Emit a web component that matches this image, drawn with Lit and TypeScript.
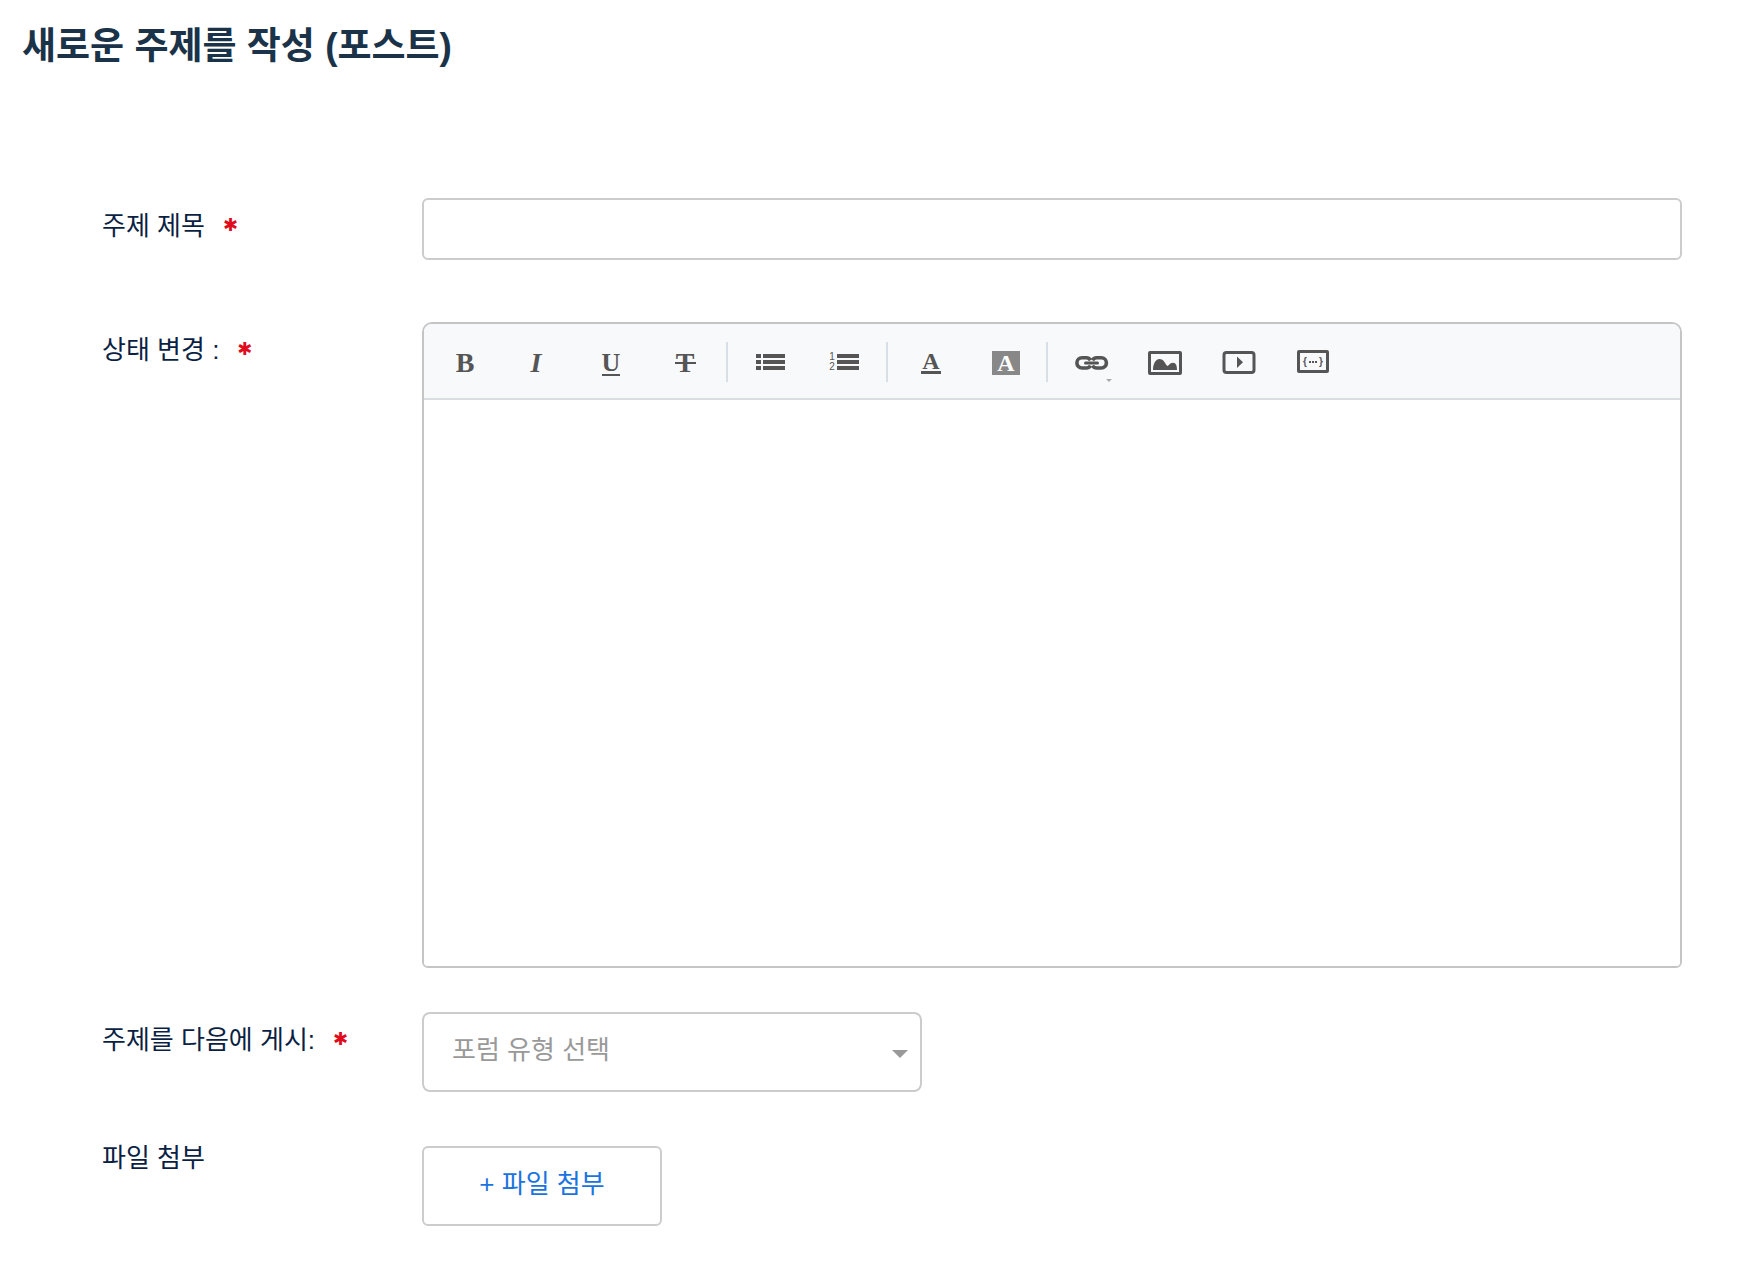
import { LitElement, html, css, svg, TemplateResult, SVGTemplateResult } from "lit";
import { customElement } from "lit/decorators.js";

interface Tool {
  label: string;
  art: SVGTemplateResult;
}

const toolGroups: Tool[][] = [
  [
    { label: "굵게", art: svg`<text class="serif large" x="39" y="48">B</text>` },
    { label: "기울임", art: svg`<text class="serif large italic" x="36" y="48">I</text>` },
    {
      label: "밑줄",
      art: svg`<text class="serif medium" x="37" y="47">U</text><rect x="28" y="50" width="18" height="2" />`,
    },
    {
      label: "취소선",
      art: svg`<text class="serif large" x="37" y="48">T</text><rect x="27" y="38" width="21" height="2" />`,
    },
  ],
  [
    {
      label: "글머리 기호 목록",
      art: svg`<path d="M22 30h5v4h-5zM29 30h22v4h-22zM22 36h5v4h-5zM29 36h22v4h-22zM22 42h5v4h-5zM29 42h22v4h-22z" />`,
    },
    {
      label: "번호 매기기 목록",
      art: svg`<path d="M29 30h22v4h-22zM29 36h22v4h-22zM29 42h22v4h-22z" />
        <text class="digit" x="24" y="36">1</text><text class="digit" x="24" y="46">2</text>`,
    },
  ],
  [
    {
      label: "글자 색",
      art: svg`<text class="serif small" x="37" y="45">A</text><rect x="27" y="47" width="20" height="3" />`,
    },
    {
      label: "배경 색",
      art: svg`<rect class="swatch" x="24" y="27" width="28" height="24" /><text class="serif small inverse" x="38" y="47">A</text>`,
    },
  ],
  [
    {
      label: "링크",
      art: svg`<path class="line" stroke-width="3.6" d="M36.5 36.2C35.5 34.6 34.4 33.8 32.5 33.8H28a5 5 0 0 0 0 10.2h4.5c1.9 0 3-.8 4-2.4M38.5 36.2C39.5 34.6 40.6 33.8 42.5 33.8H47.3a5 5 0 0 1 0 10.2h-4.8c-1.9 0-3-.8-4-2.4" />
        <path class="line" stroke-width="3" stroke-linecap="round" d="M31.5 38.9h12" />
        <path class="hint" d="M52 55h6l-3 3z" />`,
    },
    {
      label: "이미지",
      art: svg`<rect class="line" stroke-width="3" x="21.5" y="28.5" width="31" height="21" rx=".5" />
        <path d="M25 46c0-6 2.500-11 6.500-11 3.500 0 5 3 6.500 5.500 1 1.800 2 1.800 3 .3 1-1.300 2.500-2 4-2 3 0 4 3 4 7.200z" />`,
    },
    {
      label: "동영상",
      art: svg`<rect class="line" stroke-width="3" x="22" y="28.5" width="30" height="20" rx="2.5" />
        <path d="M35 32.5l6 5.8-6 5.8z" />`,
    },
    {
      label: "코드",
      art: svg`<rect class="line" stroke-width="3" x="22.5" y="27.5" width="29" height="20" rx=".5" />
        <text class="brace" x="29" y="41">{</text>
        <path d="M33 37h2v2h-2zM36 37h2v2h-2zM39 37h2v2h-2z" />
        <text class="brace" x="45" y="41">}</text>`,
    },
  ],
];

@customElement("editor-toolbar")
export class EditorToolbar extends LitElement {
  static styles = css`
    :host {
      display: block;
    }
    .bar {
      display: flex;
      flex-wrap: wrap;
      align-items: center;
      padding-left: 2px;
      background: #f8f9fb;
      border-bottom: 2px solid #dadee2;
    }
    .divider {
      width: 2px;
      height: 40px;
      margin: 2px 6px 0 4px;
      background: #d8dfe5;
    }
    .tool {
      display: block;
      padding: 0;
      border: 0;
      background: none;
      cursor: pointer;
    }
    .art {
      display: block;
      width: 74px;
      height: 74px;
      fill: #555;
    }
    .serif {
      font-family: "Liberation Serif", serif;
      font-weight: 700;
      text-anchor: middle;
    }
    .large {
      font-size: 28px;
    }
    .medium {
      font-size: 26px;
    }
    .small {
      font-size: 24px;
    }
    .italic {
      font-style: italic;
    }
    .inverse {
      fill: #fff;
    }
    .digit {
      font: 10px "Liberation Sans", sans-serif;
      text-anchor: middle;
    }
    .brace {
      font: 700 10px "Liberation Sans", sans-serif;
      text-anchor: middle;
    }
    .swatch {
      fill: #888;
    }
    .line {
      fill: none;
      stroke: #555;
    }
    .hint {
      fill: #aaa;
    }
  `;

  render() {
    return html`<div class="bar" role="toolbar" aria-label="서식">
      ${toolGroups.map(
        (group, i) => html`${i > 0 ? html`<span class="divider"></span>` : null}${group.map(
          (tool) => html`<button class="tool" type="button" aria-label=${tool.label}>
            <svg class="art" viewBox="0 0 74 74" aria-hidden="true">${tool.art}</svg>
          </button>`
        )}`
      )}
    </div>`;
  }
}

@customElement("app-root")
export class AppRoot extends LitElement {
  static styles = css`
    :host {
      display: block;
      font-family: "Liberation Sans", "Noto Sans CJK KR", sans-serif;
      font-size: 26px;
      color: #0b1f44;
    }
    * {
      box-sizing: border-box;
    }
    .page {
      padding: 20px 58px 38px 22px;
      background: #fff;
    }
    .title {
      margin: 0;
      font-size: 37px;
      line-height: 54px;
      font-weight: 700;
      color: #1a3349;
    }
    .form {
      padding: 124px 0 0 80px;
    }
    .row {
      display: grid;
      grid-template-columns: 320px minmax(0, 1fr);
      align-items: start;
      margin-bottom: 62px;
    }
    .row.body {
      margin-bottom: 44px;
    }
    .row.forum {
      margin-bottom: 38px;
    }
    .row.files {
      margin-bottom: 0;
    }
    .label {
      display: flex;
      align-items: center;
      gap: 18px;
      line-height: 56px;
    }
    .required {
      padding-bottom: 2px;
      font-family: "DejaVu Sans", sans-serif;
      font-size: 18px;
      line-height: 24px;
      font-weight: 700;
      color: #e00b1c;
    }
    .field {
      font: inherit;
      color: inherit;
      background: #fff;
      border: 2px solid #ccc;
      border-radius: 6px;
    }
    .subject {
      width: 100%;
      height: 62px;
      padding: 0 24px;
    }
    .editor {
      border: 2px solid #c5c5c5;
      border-radius: 10px 10px 6px 6px;
      overflow: hidden;
    }
    .content {
      display: block;
      width: 100%;
      height: 566px;
      padding: 20px 24px;
      border: 0;
      font: inherit;
      color: inherit;
      resize: none;
    }
    .picker {
      display: grid;
      width: 500px;
      max-width: 100%;
      align-items: center;
    }
    .choice {
      grid-area: 1 / 1;
      height: 80px;
      padding: 0 48px 4px 28px;
      border-radius: 8px;
      color: #999;
      appearance: none;
    }
    .caret {
      grid-area: 1 / 1;
      justify-self: end;
      width: 16px;
      height: 8px;
      margin: 4px 14px 0 0;
      fill: #999;
      pointer-events: none;
    }
    .attach-cell {
      padding-top: 16px;
    }
    .attach {
      width: 240px;
      height: 80px;
      padding: 0 0 10px;
      color: #1a73e0;
      cursor: pointer;
    }
  `;

  private label(id: string, text: string, required = true): TemplateResult {
    return html`<label class="label" for=${id}
      ><span>${text}</span>${required
        ? html`<span class="required" aria-hidden="true">✱</span>`
        : null}</label
    >`;
  }

  render() {
    return html`
      <main class="page">
        <h1 class="title">새로운 주제를 작성 (포스트)</h1>
        <form class="form">
          <div class="row">
            ${this.label("subject", "주제 제목")}
            <input class="field subject" id="subject" type="text" required />
          </div>
          <div class="row body">
            ${this.label("content", "상태 변경 :")}
            <div class="editor">
              <editor-toolbar></editor-toolbar>
              <textarea class="content" id="content" required></textarea>
            </div>
          </div>
          <div class="row forum">
            ${this.label("forum", "주제를 다음에 게시:")}
            <div class="picker">
              <select class="field choice" id="forum" required>
                <option value="">포럼 유형 선택</option>
              </select>
              <svg class="caret" viewBox="0 0 16 8" aria-hidden="true"><path d="M0 0h16l-8 8z" /></svg>
            </div>
          </div>
          <div class="row files">
            ${this.label("attach", "파일 첨부", false)}
            <div class="attach-cell">
              <button class="field attach" id="attach" type="button">+ 파일 첨부</button>
            </div>
          </div>
        </form>
      </main>
    `;
  }
}
